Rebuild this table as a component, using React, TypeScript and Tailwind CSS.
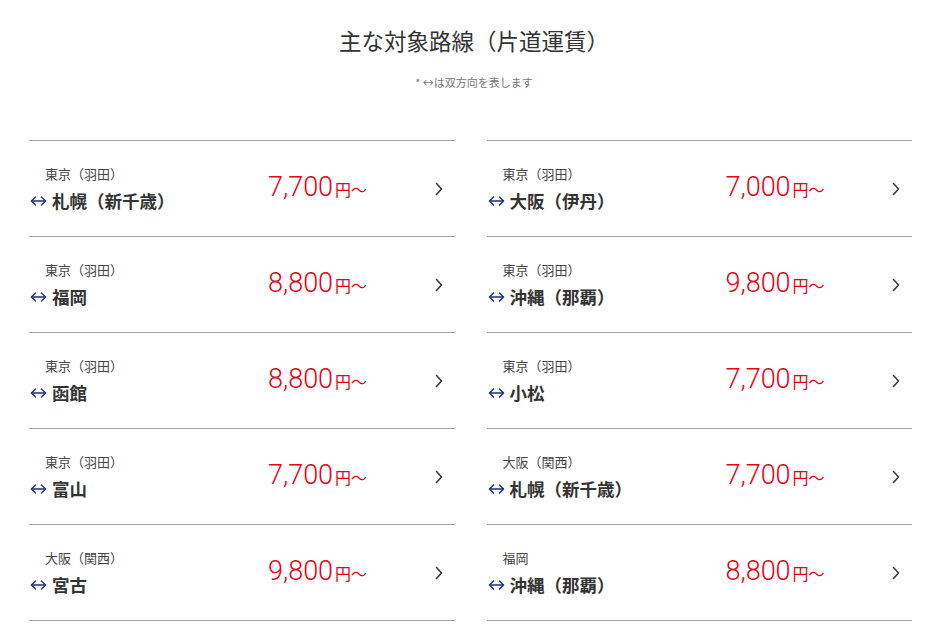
const ROUTES: { from: string; to: string; price: string }[][] = [
  [
    { from: '東京（羽田）', to: '札幌（新千歳）', price: '7,700' },
    { from: '東京（羽田）', to: '福岡', price: '8,800' },
    { from: '東京（羽田）', to: '函館', price: '8,800' },
    { from: '東京（羽田）', to: '富山', price: '7,700' },
    { from: '大阪（関西）', to: '宮古', price: '9,800' },
  ],
  [
    { from: '東京（羽田）', to: '大阪（伊丹）', price: '7,000' },
    { from: '東京（羽田）', to: '沖縄（那覇）', price: '9,800' },
    { from: '東京（羽田）', to: '小松', price: '7,700' },
    { from: '大阪（関西）', to: '札幌（新千歳）', price: '7,700' },
    { from: '福岡', to: '沖縄（那覇）', price: '8,800' },
  ],
];

function BothWays() {
  return (
    <svg width="17" height="12" viewBox="0 0 17 12" fill="none" stroke="#1d2f83" strokeWidth={1.4} strokeLinecap="round" strokeLinejoin="round" className="shrink-0">
      <path d="M1.5 6h14" />
      <path d="M5.5 2L1.5 6l4 4" />
      <path d="M11.5 2l4 4-4 4" />
    </svg>
  );
}

function Chevron() {
  return (
    <svg width="8" height="14" viewBox="0 0 8 14" fill="none" stroke="#333" strokeWidth={1.5} strokeLinecap="round" strokeLinejoin="round">
      <path d="M1.5 1.5L6.5 7l-5 5.5" />
    </svg>
  );
}

function RouteRow({ r }: { r: { from: string; to: string; price: string } }) {
  return (
    <a href="#" className="flex items-center h-[96px] border-t border-[#a3a3a3] text-[#333]">
      <div className="w-[239px] pl-px">
        <div className="pl-[15px] text-[13px] leading-[16px] text-[#444]">{r.from}</div>
        <div className="mt-[8px] flex items-center gap-[5px]">
          <BothWays />
          <span className="text-[17.5px] leading-[22px] font-bold">{r.to}</span>
        </div>
      </div>
      <div className="flex items-baseline text-[#e60012] -mt-[2px]">
        <span className="text-[27px] leading-none font-['Roboto',sans-serif] font-light">{r.price}</span>
        <span className="ml-[2px] text-[16px] leading-none">円～</span>
      </div>
      <div className="ml-auto mr-[12px] pt-[1px]">
        <Chevron />
      </div>
    </a>
  );
}

export default function App() {
  return (
    <div className="bg-white min-h-[641px] font-['Noto_Sans_CJK_JP','Noto_Sans',sans-serif] text-[#333]">
      <h2 className="pt-[25px] text-center text-[22.5px] leading-[30px] text-[#333]">主な対象路線（片道運賃）</h2>
      <p className="mt-[19px] text-center text-[11px] leading-[16px] text-[#777]">* ↔は双方向を表します</p>
      <div className="mt-[50px] ml-[29px] w-[883px] grid grid-cols-2 gap-x-[32px]">
        {ROUTES.map((col, i) => (
          <div key={i} className="border-b border-[#a3a3a3]">
            {col.map((r, j) => (
              <RouteRow key={j} r={r} />
            ))}
          </div>
        ))}
      </div>
    </div>
  );
}
